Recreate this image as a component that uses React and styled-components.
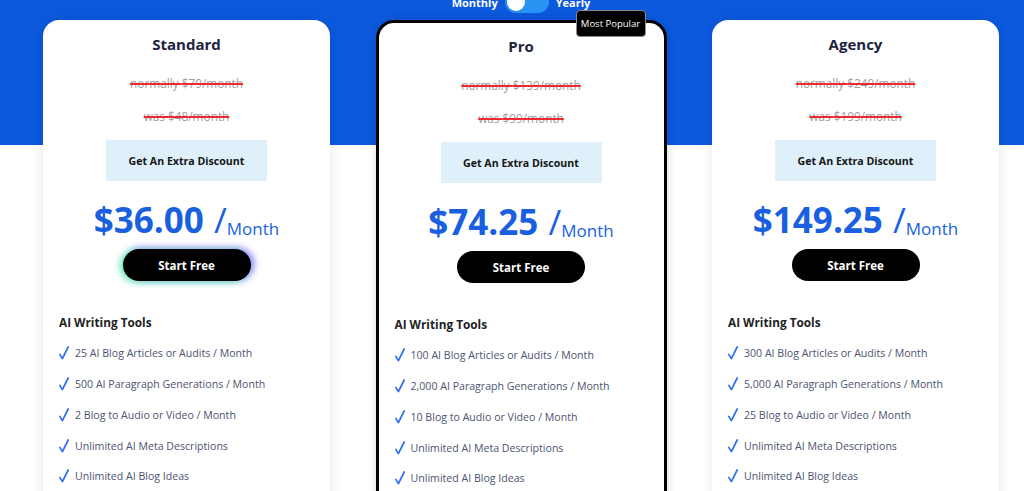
import styled, { createGlobalStyle, css } from "styled-components";

const GlobalStyle = createGlobalStyle`
  html, body {
    margin: 0;
    padding: 0;
    background: #fff;
    font-family: "Open Sans", "Liberation Sans", sans-serif;
    overflow: hidden;
  }
`;

const Page = styled.div`
  width: 1024px;
  height: 491px;
  overflow: hidden;
  background: linear-gradient(to bottom, #0c59de 0, #0c59de 145px, #fff 145px);
`;

const ToggleRow = styled.div`
  display: flex;
  justify-content: center;
  align-items: center;
  gap: 7px;
  margin-top: -9px;
  height: 22px;
  padding-left: 18px;
`;

const ToggleLabel = styled.span`
  color: #fff;
  font-size: 11px;
  font-weight: 700;
`;

const Switch = styled.div`
  width: 44px;
  height: 22px;
  border-radius: 11px;
  background: #2a92f2;
  display: flex;
  align-items: center;
  padding: 0 2px;
  box-sizing: border-box;
`;

const Knob = styled.div`
  width: 18px;
  height: 18px;
  border-radius: 50%;
  background: #fff;
`;

const Cards = styled.div`
  display: flex;
  align-items: flex-start;
  gap: 45.5px;
  padding-left: 43px;
  margin-top: 7px;
`;

const Card = styled.div`
  position: relative;
  width: 287px;
  height: 520px;
  flex-shrink: 0;
  background: #fff;
  border-radius: 16px;
  box-shadow: 0 0 12px rgba(0, 0, 0, 0.1);
  padding: 14px 16px 0;
  box-sizing: border-box;
  display: flex;
  flex-direction: column;
  align-items: center;
  ${(p) =>
    p.featured &&
    css`
      width: 291px;
      border: 3px solid #000;
      border-radius: 18px;
      padding-top: 13px;
      box-shadow: 0 0 10px rgba(0, 0, 0, 0.15);
    `}
`;

const Badge = styled.div`
  position: absolute;
  top: -13px;
  right: 18px;
  width: 70px;
  height: 27px;
  box-sizing: border-box;
  background: #000;
  border: 1px solid #8a8a8a;
  border-radius: 4px;
  color: #fff;
  font-size: 9.5px;
  display: flex;
  align-items: center;
  justify-content: center;
`;

const Title = styled.h2`
  margin: 0;
  font-size: 15px;
  line-height: 20px;
  font-weight: 700;
  color: #1d2340;
`;

const Struck = styled.div`
  margin-top: ${(p) => p.gap}px;
  font-size: 11.8px;
  line-height: 18px;
  color: #9c9c9c;
  text-decoration: line-through;
  text-decoration-color: #ec2a2f;
  text-decoration-thickness: 1.5px;
`;

const Discount = styled.div`
  margin-top: 15px;
  width: 161px;
  height: 41px;
  background: #dff0fb;
  color: #151515;
  font-size: 10.6px;
  font-weight: 700;
  display: flex;
  align-items: center;
  justify-content: center;
`;

const PriceRow = styled.div`
  margin-top: 17px;
  display: flex;
  align-items: baseline;
  color: #1a5fdf;
  line-height: 44px;
`;

const Amount = styled.span`
  font-size: 35px;
  font-weight: 700;
`;

const Slash = styled.span`
  font-size: 35px;
  font-weight: 400;
  margin-left: 10px;
`;

const Per = styled.span`
  font-size: 17px;
  font-weight: 400;
  position: relative;
  top: 2px;
`;

const StartButton = styled.button`
  margin-top: 0;
  width: 128px;
  height: 32px;
  border: none;
  border-radius: 16px;
  background: #000;
  color: #fff;
  font-family: inherit;
  font-size: 11.5px;
  font-weight: 700;
  ${(p) =>
    p.glow &&
    css`
      box-shadow: -3px 1px 7px rgba(70, 235, 170, 0.85),
        3px -1px 7px rgba(120, 95, 255, 0.85);
    `}
`;

const FeatureHead = styled.div`
  align-self: stretch;
  margin-top: 32px;
  font-size: 11.8px;
  font-weight: 700;
  color: #222;
  line-height: 18px;
`;

const FeatureList = styled.ul`
  align-self: stretch;
  list-style: none;
  margin: 7px 0 0;
  padding: 0;
`;

const Feature = styled.li`
  display: flex;
  align-items: center;
  gap: 6px;
  height: 30.75px;
  font-size: 10.6px;
  color: #4c5470;
`;

const Check = () => (
  <svg width="10" height="14" viewBox="0 0 10 14" fill="none">
    <path
      d="M0.8 8.4 L3.4 12.6 L9.2 1"
      stroke="#2f6ff0"
      strokeWidth="1.7"
      strokeLinecap="round"
      strokeLinejoin="round"
    />
  </svg>
);

const plans = [
  {
    name: "Standard",
    normally: "$79",
    was: "$48",
    price: "$36.00",
    glow: true,
    features: [
      "25 AI Blog Articles or Audits / Month",
      "500 AI Paragraph Generations / Month",
      "2 Blog to Audio or Video / Month",
      "Unlimited AI Meta Descriptions",
      "Unlimited AI Blog Ideas",
    ],
  },
  {
    name: "Pro",
    normally: "$139",
    was: "$99",
    price: "$74.25",
    featured: true,
    features: [
      "100 AI Blog Articles or Audits / Month",
      "2,000 AI Paragraph Generations / Month",
      "10 Blog to Audio or Video / Month",
      "Unlimited AI Meta Descriptions",
      "Unlimited AI Blog Ideas",
    ],
  },
  {
    name: "Agency",
    normally: "$249",
    was: "$199",
    price: "$149.25",
    features: [
      "300 AI Blog Articles or Audits / Month",
      "5,000 AI Paragraph Generations / Month",
      "25 Blog to Audio or Video / Month",
      "Unlimited AI Meta Descriptions",
      "Unlimited AI Blog Ideas",
    ],
  },
];

export default function App() {
  return (
    <>
      <GlobalStyle />
      <Page>
        <ToggleRow>
          <ToggleLabel>Monthly</ToggleLabel>
          <Switch>
            <Knob />
          </Switch>
          <ToggleLabel>Yearly</ToggleLabel>
        </ToggleRow>
        <Cards>
          {plans.map((plan) => (
            <Card key={plan.name} featured={plan.featured}>
              {plan.featured && <Badge>Most Popular</Badge>}
              <Title>{plan.name}</Title>
              <Struck gap={20}>normally {plan.normally}/month</Struck>
              <Struck gap={15}>was {plan.was}/month</Struck>
              <Discount>Get An Extra Discount</Discount>
              <PriceRow>
                <Amount>{plan.price}</Amount>
                <Slash>/</Slash>
                <Per>Month</Per>
              </PriceRow>
              <StartButton glow={plan.glow}>Start Free</StartButton>
              <FeatureHead>AI Writing Tools</FeatureHead>
              <FeatureList>
                {plan.features.map((f) => (
                  <Feature key={f}>
                    <Check />
                    {f}
                  </Feature>
                ))}
              </FeatureList>
            </Card>
          ))}
        </Cards>
      </Page>
    </>
  );
}
